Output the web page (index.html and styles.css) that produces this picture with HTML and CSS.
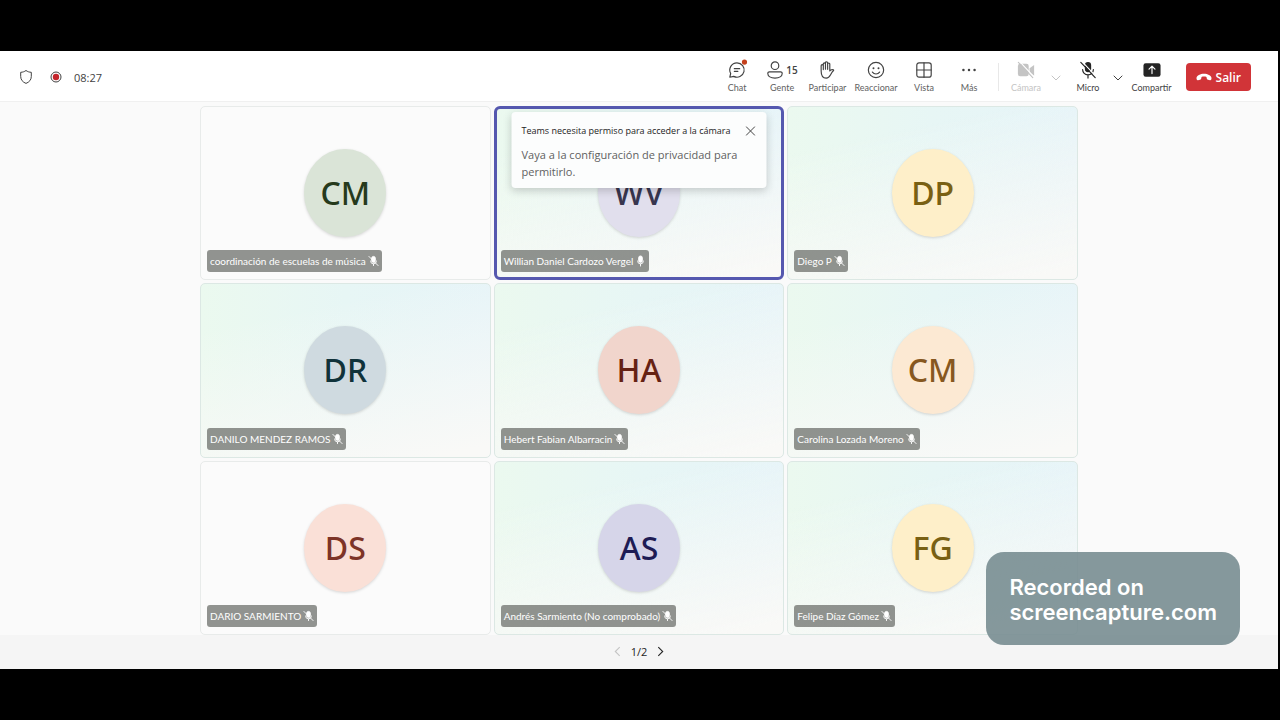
FILE: index.html
```html
<!DOCTYPE html>
<html lang="es">
<head>
  <meta charset="UTF-8" />
  <meta name="viewport" content="width=device-width, initial-scale=1" />
  <title>Reunión</title>
  <link rel="stylesheet" href="styles.css">
</head>
<body>
  <!-- shared icons -->
  <svg class="sprite" aria-hidden="true">
    <symbol id="mic-off" viewBox="0 0 12 12">
      <rect x="4" y="1" width="4" height="6.5" rx="2" fill="currentColor" />
      <path d="M2.8 6a3.2 3.2 0 0 0 6.4 0M6 9.2V11M1 1l10 10" fill="none" stroke="currentColor" stroke-linecap="round" />
    </symbol>
    <symbol id="mic-on" viewBox="0 0 12 12">
      <rect x="4" y="0.5" width="4" height="7" rx="2" fill="currentColor" />
      <path d="M2.8 6a3.2 3.2 0 0 0 6.4 0M6 9.2v2.3" fill="none" stroke="currentColor" stroke-linecap="round" />
    </symbol>
    <symbol id="chevron" viewBox="0 0 10 6">
      <path d="M1 1l4 4 4-4" fill="none" stroke="currentColor" stroke-linecap="round" />
    </symbol>
  </svg>

  <div class="app">
    <header class="toolbar">
      <div class="status">
        <svg class="shield" viewBox="0 0 14 16"><path d="M7 1.500c1.600 1.200 3.300 1.700 5.300 1.800v4.200c0 3.300-2 5.600-5.300 6.900-3.300-1.300-5.300-3.600-5.300-6.900V3.300C3.700 3.200 5.400 2.700 7 1.500z" /></svg>
        <svg class="record" viewBox="0 0 12 12"><circle class="ring" cx="6" cy="6" r="5" /><circle class="core" cx="6" cy="6" r="3.200" /></svg>
        <span class="timer">08:27</span>
      </div>

      <div class="actions">
        <button class="action">
          <span class="icon">
            <svg viewBox="0 0 20 20"><path d="M10 2a8 8 0 1 1-3.700 15.100L2 18l1-4.100A8 8 0 0 1 10 2zM7 8.500h6M7 11.500h4" /><circle class="badge" cx="18.300" cy="1.200" r="2.900" /></svg>
          </span>
          <span>Chat</span>
        </button>
        <button class="action">
          <span class="icon">
            <svg viewBox="0 0 20 20"><circle cx="10" cy="5.200" r="4.200" /><path d="M3.800 12h12.400a1.800 1.800 0 0 1 1.800 1.800c0 3-3.300 5.200-8 5.200s-8-2.200-8-5.200A1.800 1.800 0 0 1 3.800 12z" /></svg>
            <b>15</b>
          </span>
          <span>Gente</span>
        </button>
        <button class="action">
          <span class="icon">
            <svg viewBox="0 0 20 20"><path d="M3.500 11V5.300a1.200 1.200 0 0 1 2.400 0V3.200a1.200 1.200 0 0 1 2.400 0V2a1.200 1.200 0 0 1 2.400 0v1.400a1.200 1.200 0 0 1 2.400 0V11c1-1.300 2.200-1.900 3.900-1.200.5.200.5.700.1 1-1.600 1.300-2.200 3-3.300 4.800-1.200 2.300-2.600 3.400-4.700 3.400-3.600 0-5.600-3-5.600-8zM5.900 5v4.500M8.300 3.200v6M10.700 3.400v5.900" /></svg>
          </span>
          <span>Participar</span>
        </button>
        <button class="action">
          <span class="icon">
            <svg viewBox="0 0 20 20"><circle cx="10" cy="10" r="8.500" /><path d="M6 12.300c2 2.800 6 2.800 8 0" /><circle class="solid" cx="7.200" cy="8" r="1.100" /><circle class="solid" cx="12.800" cy="8" r="1.100" /></svg>
          </span>
          <span>Reaccionar</span>
        </button>
        <button class="action">
          <span class="icon">
            <svg viewBox="0 0 20 20"><rect x="2" y="2" width="16" height="16" rx="2.500" /><path d="M10 2v16M2 10h16" /></svg>
          </span>
          <span>Vista</span>
        </button>
        <button class="action">
          <span class="icon">
            <svg viewBox="0 0 20 20"><circle class="solid" cx="3.800" cy="10" r="1.400" /><circle class="solid" cx="10" cy="10" r="1.400" /><circle class="solid" cx="16.200" cy="10" r="1.400" /></svg>
          </span>
          <span>Más</span>
        </button>

        <span class="divider"></span>

        <button class="action disabled" disabled>
          <span class="icon">
            <svg viewBox="0 0 20 20"><rect class="fill" x="1" y="3" width="12" height="14" rx="2.500" /><path class="fill" d="M14 8L19 4.500v12L14 13z" /><path class="gap" d="M3.200 1l16 17" /><path d="M1.500 1.500l16 17" /></svg>
          </span>
          <span>Cámara</span>
        </button>
        <button class="more disabled" aria-label="Opciones de cámara" disabled><svg><use href="#chevron" /></svg></button>
        <button class="action strong">
          <span class="icon">
            <svg viewBox="0 0 20 20"><rect class="fill" x="6.500" y="1" width="7" height="11.500" rx="3.500" /><path d="M4 9.500a6 6 0 0 0 12 0M10 15.500V19" /><path class="gap" d="M3.700 1l16 17" /><path d="M2 1.500l16 17" /></svg>
          </span>
          <span>Micro</span>
        </button>
        <button class="more" aria-label="Opciones de micrófono"><svg><use href="#chevron" /></svg></button>
        <button class="action strong">
          <span class="icon">
            <svg viewBox="0 0 20 20"><rect class="fill" x="0.500" y="2.500" width="19" height="15" rx="2.500" /><path class="arrow" d="M10 14V6M6.700 9L10 5.700 13.300 9" /></svg>
          </span>
          <span>Compartir</span>
        </button>
        <button class="leave">
          <svg viewBox="0 0 16 8"><path d="M8 .8c3.700 0 7.200 1.600 7.500 4.300.1 1.400-.4 2.300-1.500 2.100l-2-.4c-.8-.2-1.200-.7-1.300-1.500L10.500 4C9 3.400 7 3.400 5.500 4l-.2 1.300C5.200 6.100 4.800 6.600 4 6.800l-2 .4C.900 7.400.400 6.500.500 5.100.800 2.400 4.300.8 8 .8z" /></svg>
          Salir
        </button>
      </div>
    </header>

    <main class="stage">
      <div class="grid">
        <div class="tile plain">
          <div class="avatar green">CM</div>
          <div class="name">coordinación de escuelas de música <svg><use href="#mic-off" /></svg></div>
        </div>
        <div class="tile speaking">
          <div class="avatar lavender">WV</div>
          <div class="name">Willian Daniel Cardozo Vergel <svg><use href="#mic-on" /></svg></div>
        </div>
        <div class="tile">
          <div class="avatar yellow">DP</div>
          <div class="name">Diego P <svg><use href="#mic-off" /></svg></div>
        </div>
        <div class="tile">
          <div class="avatar steel">DR</div>
          <div class="name">DANILO MENDEZ RAMOS <svg><use href="#mic-off" /></svg></div>
        </div>
        <div class="tile">
          <div class="avatar red">HA</div>
          <div class="name">Hebert Fabian Albarracin <svg><use href="#mic-off" /></svg></div>
        </div>
        <div class="tile">
          <div class="avatar peach">CM</div>
          <div class="name">Carolina Lozada Moreno <svg><use href="#mic-off" /></svg></div>
        </div>
        <div class="tile plain">
          <div class="avatar pink">DS</div>
          <div class="name">DARIO SARMIENTO <svg><use href="#mic-off" /></svg></div>
        </div>
        <div class="tile">
          <div class="avatar navy">AS</div>
          <div class="name">Andrés Sarmiento (No comprobado) <svg><use href="#mic-off" /></svg></div>
        </div>
        <div class="tile">
          <div class="avatar yellow">FG</div>
          <div class="name">Felipe Díaz Gómez <svg><use href="#mic-off" /></svg></div>
        </div>
      </div>

      <div class="popover" role="dialog" aria-labelledby="popoverTitle">
        <div class="popover-head">
          <h2 id="popoverTitle">Teams necesita permiso para acceder a la cámara</h2>
          <button class="close" aria-label="Cerrar"><svg viewBox="0 0 10 10"><path d="M0.500 0.500l9 9M9.500 0.500l-9 9" /></svg></button>
        </div>
        <p>Vaya a la configuración de privacidad para permitirlo.</p>
      </div>
    </main>

    <footer class="pager">
      <button class="prev" aria-label="Anterior" disabled><svg viewBox="0 0 6 10"><path d="M5 1L1 5l4 4" /></svg></button>
      <span>1/2</span>
      <button aria-label="Siguiente"><svg viewBox="0 0 6 10"><path d="M1 1l4 4-4 4" /></svg></button>
    </footer>
  </div>

  <div class="watermark">Recorded on<br>screencapture.com</div>
</body>
</html>
```
FILE: styles.css
```css
:root {
  --text: #424242;
  --dark: #242424;
  --muted: #c4c4c4;
  --stage: #fafafa;
  --accent: #5558af;
  --leave: #d13438;
}

* {
  box-sizing: border-box;
}

body {
  margin: 0;
  min-height: 100vh;
  padding: 51px 2px 51px 0;
  display: flex;
  background: #000;
  color: var(--text);
  font-family: "Open Sans", "Noto Sans", sans-serif;
}

button {
  padding: 0;
  border: none;
  background: none;
  color: inherit;
  font: inherit;
  cursor: pointer;
}

svg {
  display: block;
  fill: none;
  stroke: currentColor;
}

.sprite {
  position: absolute;
  width: 0;
  height: 0;
}

.app {
  flex: 1;
  display: flex;
  flex-direction: column;
  background: var(--stage);
}

/* toolbar */
.toolbar {
  height: 51px;
  padding: 2px 27px 0 19px;
  display: flex;
  align-items: center;
  justify-content: space-between;
  background: #fff;
  border-bottom: 1px solid #f0f0f0;
}

.status {
  display: flex;
  align-items: center;
  font-size: 11px;
}

.shield {
  width: 14px;
  height: 16px;
}

.record {
  width: 12px;
  height: 12px;
  margin: 0 12px 0 17px;
}

.record .core {
  fill: #c4252c;
  stroke: none;
}

.actions {
  display: flex;
  align-items: center;
}

.action {
  min-width: 45px;
  padding: 0 4px;
  display: flex;
  flex-direction: column;
  align-items: center;
  gap: 2px;
  font-family: Lato, sans-serif;
  font-size: 9px;
  line-height: 12px;
  color: #616161;
}

.icon {
  height: 20px;
  display: flex;
  align-items: center;
  gap: 2px;
  color: var(--text);
}

.icon svg {
  width: 18px;
  height: 20px;
  stroke-width: 1.3;
  stroke-linecap: round;
  stroke-linejoin: round;
  overflow: visible;
}

.icon b {
  font-family: "Open Sans", sans-serif;
  font-size: 10px;
  font-weight: 600;
}

.icon .badge {
  fill: #c4401c;
  stroke: none;
}

.icon .solid,
.icon .fill {
  fill: currentColor;
  stroke: none;
}

.icon .gap,
.icon .arrow {
  stroke: #fff;
}

.strong .icon {
  color: var(--dark);
}

.strong {
  color: var(--text);
}

.disabled,
.disabled .icon {
  color: var(--muted);
}

.divider {
  width: 1px;
  height: 28px;
  margin: 0 5px 0 6px;
  background: #e8e8e8;
}

.more {
  width: 14px;
  margin-right: 3px;
  display: flex;
  justify-content: center;
  padding-top: 2px;
}

.more svg {
  width: 10px;
  height: 6px;
}

.leave {
  height: 28px;
  margin-left: 10px;
  padding: 0 10px;
  display: flex;
  align-items: center;
  gap: 4px;
  border-radius: 4px;
  background: var(--leave);
  color: #fff;
  font-size: 12px;
  font-weight: 600;
}

.leave svg {
  width: 16px;
  height: 8px;
  fill: #fff;
  stroke: none;
}

/* participants */
.stage {
  position: relative;
  flex: 1;
  padding: 4px 16px 0;
  display: flex;
  justify-content: center;
}

.grid {
  flex: 1;
  max-width: 878px;
  display: grid;
  grid-template-columns: repeat(3, 1fr);
  grid-template-rows: repeat(3, 1fr);
  gap: 3px;
}

.tile {
  position: relative;
  display: flex;
  align-items: center;
  justify-content: center;
  border: 1px solid #dce8e4;
  border-radius: 5px;
  background:
    linear-gradient(168deg, rgba(249, 249, 247, 0) 20%, #f9f9f7 95%),
    linear-gradient(90deg, #ebf9ef, #e7f6f5 50%, #e6f4f8);
}

.tile.plain {
  background: #fbfbfb;
  border-color: #e8ebea;
}

.tile.speaking {
  border: 3px solid var(--accent);
  border-radius: 6px;
}

.avatar {
  width: 82px;
  height: 88px;
  display: flex;
  align-items: center;
  justify-content: center;
  border-radius: 50%;
  box-shadow: 0 1px 3px rgba(0, 0, 0, 0.15);
  font-family: "Noto Sans", sans-serif;
  font-size: 32px;
  font-weight: 500;
  line-height: 44px;
}

.green { background: #dae4d7; color: #263a1c; }
.lavender { background: #e1dfed; color: #38364f; }
.yellow { background: #feefc9; color: #796013; }
.steel { background: #cfdae0; color: #10323a; }
.red { background: #f1d5cc; color: #662113; }
.peach { background: #fce9d3; color: #87581f; }
.pink { background: #fae0d7; color: #7d3427; }
.navy { background: #d6d5e9; color: #1e1c55; }

.name {
  position: absolute;
  left: 6px;
  bottom: 7px;
  height: 22px;
  padding: 0 3px;
  display: flex;
  align-items: center;
  gap: 2px;
  border-radius: 3px;
  background: rgba(110, 112, 108, 0.75);
  color: #fff;
  font-family: Lato, sans-serif;
  font-size: 10px;
  white-space: nowrap;
}

.speaking .name {
  left: 4px;
  bottom: 5px;
}

.name svg {
  width: 11px;
  height: 12px;
}

/* camera permission */
.popover {
  position: absolute;
  top: 10px;
  left: 50%;
  transform: translateX(-50%);
  width: 255px;
  padding: 12px 11px 8px 10px;
  border-radius: 4px;
  background: #fcfdfd;
  box-shadow: 0 3px 8px rgba(0, 0, 0, 0.18);
}

.popover-head {
  display: flex;
  align-items: center;
  justify-content: space-between;
}

.popover h2 {
  margin: 0;
  font-size: 9px;
  line-height: 14px;
  font-weight: 500;
  color: var(--dark);
  white-space: nowrap;
}

.close svg {
  width: 10px;
  height: 10px;
}

.popover p {
  margin: 8px 0 0;
  font-size: 11px;
  line-height: 17px;
  color: #616161;
}

/* pager */
.pager {
  height: 34px;
  padding-bottom: 2px;
  display: flex;
  align-items: center;
  justify-content: center;
  gap: 10px;
  background: #f5f5f5;
  font-size: 11px;
  color: var(--dark);
}

.pager svg {
  width: 7px;
  height: 11px;
}

.pager .prev {
  color: var(--muted);
}

.watermark {
  position: absolute;
  right: 40px;
  bottom: 75px;
  padding: 23px 23px 20px;
  border-radius: 18px;
  background: rgba(120, 141, 145, 0.9);
  color: #fff;
  font-family: Inter, sans-serif;
  font-size: 22px;
  font-weight: 600;
  line-height: 25px;
}
```
